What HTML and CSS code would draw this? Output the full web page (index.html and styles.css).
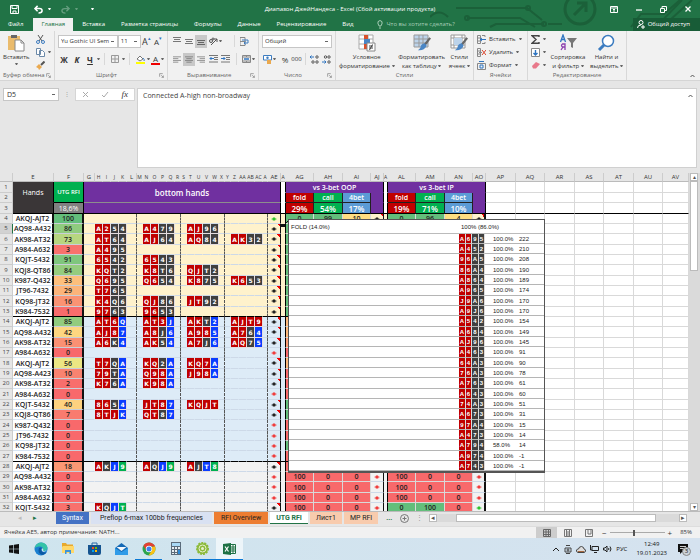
FILE: index.html
```html
<!DOCTYPE html>
<html lang="ru">
<head>
    <meta charset="UTF-8">
    <meta name="viewport" content="width=device-width, initial-scale=1.0">
    <title>Диапазон ДжейНандеса - Excel</title>
    <link rel="stylesheet" href="styles.css">
</head>
<body>
    <!-- Общие иконки -->
    <svg class="sprite" aria-hidden="true">
        <symbol id="i-eye" viewBox="0 0 12 8"><path d="M0 4Q6-2.500 12 4Q6 10.500 0 4Z" fill="currentColor" opacity=".55"/><circle cx="6" cy="4" r="2.800" fill="currentColor"/></symbol>
        <symbol id="i-launch" viewBox="0 0 8 8"><path d="M1 6V1H6M3.500 3.500L7 7M7 4V7H4" fill="none" stroke="#777"/></symbol>
        <symbol id="i-left" viewBox="0 0 12 10"><path d="M0 1H12M0 3.700H8M0 6.400H12M0 9H8" stroke="#666"/></symbol>
        <symbol id="i-center" viewBox="0 0 12 10"><path d="M0 1H12M2 3.700H10M0 6.400H12M2 9H10" stroke="#666"/></symbol>
        <symbol id="i-right" viewBox="0 0 12 10"><path d="M0 1H12M4 3.700H12M0 6.400H12M4 9H12" stroke="#666"/></symbol>
        <symbol id="i-brush" viewBox="0 0 16 16"><path d="M15 1L8 10" stroke="#666" stroke-width="2.500"/><path d="M9 7Q4 8 4 12Q3 14 1 15Q8 16 11 10Z" fill="#4a86c5"/></symbol>
    </svg>

    <header class="titlebar">
        <svg class="circuit" viewBox="0 0 270 29" fill="none" stroke="#1b6039" stroke-width="2">
            <circle cx="150" cy="9" r="15" stroke-width="3"/><path d="M144 15L156 3M147 3H156V12" stroke-width="3"/>
            <path d="M26 8H97L112 20M37 18H90L105 27M60 27L66 24H114M118 24H132M30 8H97M0 17Q9 8 18 17"/><circle cx="98" cy="8" r="2"/><circle cx="37" cy="18" r="2"/><circle cx="114" cy="24" r="2"/>
            <path d="M201 27L211 14H234L250 0M226 27L252 0M240 20L262 0"/>
        </svg>
        <div class="title-row">
            <div class="quick">
                <button aria-label="Сохранить"><svg width="9" height="9" viewBox="0 0 9 9" fill="none" stroke="#fff"><path d="M.5.500H8.500V8.500H.5ZM2 .5V3.500H7V.5M3 8.500V6H6V8.500"/></svg></button>
                <button aria-label="Отменить"><svg width="9" height="9" viewBox="0 0 10 10" fill="none" stroke="#fff" stroke-width="1.700"><path d="M4 1L1 4L4 7M1 4H6Q9 4 9 6.500Q9 9 5 9"/></svg></button>
                <span class="caret light"></span>
                <button class="faded" aria-label="Повторить"><svg width="9" height="9" viewBox="0 0 10 10" fill="none" stroke="#fff" stroke-width="1.500"><path d="M6 1L9 4L6 7M9 4H4Q1 4 1 6.500Q1 9 5 9"/></svg></button>
                <span class="caret light faded"></span>
                <span class="caret light custom"></span>
            </div>
            <h1>Диапазон ДжейНандеса - Excel (Сбой активации продукта)</h1>
            <div class="window-buttons">
                <button aria-label="Параметры ленты"><svg width="8" height="7" viewBox="0 0 8 7" fill="none" stroke="#fff"><path d="M.5.500H7.500V6.500H.5ZM1 2H7M4 6V3M3 4L4 3L5 4"/></svg></button>
                <button aria-label="Свернуть"><svg width="6" height="6" viewBox="0 0 6 6"><path d="M0 4H6" stroke="#fff" stroke-width="1.300"/></svg></button>
                <button aria-label="Восстановить"><svg width="7" height="7" viewBox="0 0 7 7" fill="none" stroke="#fff"><path d="M.5 2.500H4.500V6.500H.5ZM2 2V.5H6.500V4.500H5"/></svg></button>
                <button aria-label="Закрыть"><svg width="6" height="6" viewBox="0 0 6 6"><path d="M.5.500L5.500 5.500M5.500.500L.5 5.500" stroke="#fff" stroke-width="1.300"/></svg></button>
            </div>
        </div>
        <nav class="tabs">
            <a href="#">Файл</a>
            <a href="#" class="active">Главная</a>
            <a href="#">Вставка</a>
            <a href="#">Разметка страницы</a>
            <a href="#">Формулы</a>
            <a href="#">Данные</a>
            <a href="#">Рецензирование</a>
            <a href="#">Вид</a>
            <a href="#" class="tell-me"><svg width="6" height="9" viewBox="0 0 6 9" fill="none" stroke="#a6cdb6"><path d="M2 6Q2 5 1 4Q0 1 3 .5Q6 1 5 4Q4 5 4 6ZM2 8H4"/></svg>Что вы хотите сделать?</a>
            <button class="share"><svg width="8" height="9" viewBox="0 0 8 9" fill="none" stroke="#fff"><circle cx="4" cy="2.500" r="2"/><path d="M.5 8Q.5 5 4 5M4 7H8M6 5V9"/></svg>Общий доступ</button>
        </nav>
    </header>

    <section class="ribbon">
        <div class="group g-clipboard">
            <div class="tools">
                <button class="big"><svg width="18" height="18" viewBox="0 0 18 18"><path d="M1 2H13V16H1Z" fill="#eabb6c"/><path d="M4 1H10V4H4Z" fill="#666"/><path d="M8 6H14L17 9V17H8Z" fill="#fff" stroke="#888"/><path d="M14 6V9H17" fill="none" stroke="#888"/></svg>Вставить<span class="caret"></span></button>
                <div class="stack">
                    <button aria-label="Вырезать"><svg width="9" height="9" viewBox="0 0 9 9" fill="none"><path d="M2 0L6 6M7 0L3 6" stroke="#555"/><circle cx="2" cy="7" r="1.500" stroke="#3c7cc0"/><circle cx="7" cy="7" r="1.500" stroke="#3c7cc0"/></svg></button>
                    <button aria-label="Копировать"><svg width="9" height="9" viewBox="0 0 9 9" fill="#fff" stroke="#6b89a8"><path d="M.5.500H4.500V6.500H.5ZM3.500 2.500H6.500L8.500 4.500V8.500H3.500Z"/></svg><span class="caret"></span></button>
                    <button aria-label="Формат по образцу"><svg width="9" height="9" viewBox="0 0 9 9"><path d="M8.500.500L5 4" stroke="#555" stroke-width="2"/><path d="M3 3L6 6L3 9Q3 7 0 6Z" fill="#eaa94f"/></svg></button>
                </div>
            </div>
            <div class="group-name">Буфер обмена<svg width="5" height="5"><use href="#i-launch"/></svg></div>
        </div>

        <div class="group g-font">
            <div class="tools rows">
                <div class="row">
                    <select class="font-name" aria-label="Шрифт"><option>Yu Gothic UI Sem</option></select>
                    <select class="font-size" aria-label="Размер"><option>11</option></select>
                    <button class="grow" aria-label="Увеличить">A<i>▴</i></button>
                    <button class="shrink" aria-label="Уменьшить">A<i>▾</i></button>
                </div>
                <div class="row">
                    <button><b>Ж</b></button><button><b><em>К</em></b></button><button><b><u>Ч</u></b></button><span class="caret"></span>
                    <span class="sep"></span>
                    <button aria-label="Границы"><svg width="8" height="8" viewBox="0 0 8 8" fill="none" stroke="#999"><path d="M.5.500H7.500V7.500H.5ZM4 0V8M0 4H8"/></svg></button><span class="caret"></span>
                    <span class="sep"></span>
                    <button aria-label="Заливка"><svg width="9" height="9" viewBox="0 0 9 9"><path d="M1 4L4 1L7 4L4 6Z" fill="#fff" stroke="#777"/><path d="M7 3Q9 5 8 6" stroke="#3c7cc0" fill="none"/><path d="M0 7H9V9H0Z" fill="#ff0"/></svg></button><span class="caret"></span>
                    <button class="text-color">A</button><span class="caret"></span>
                </div>
            </div>
            <div class="group-name">Шрифт<svg width="5" height="5"><use href="#i-launch"/></svg></div>
        </div>

        <div class="group g-align">
            <div class="tools rows">
                <div class="row">
                    <button aria-label="По верхнему краю"><svg width="8" height="8" viewBox="0 0 8 8"><path d="M0 .5H8M1 2.500H7M0 4.500H8" stroke="#777"/></svg></button>
                    <button aria-label="По середине"><svg width="8" height="8" viewBox="0 0 8 8"><path d="M0 2.500H8M1 4.500H7M0 6.500H8" stroke="#777"/></svg></button>
                    <button class="on" aria-label="По нижнему краю"><svg width="8" height="8" viewBox="0 0 8 8"><path d="M0 3.500H8M1 5.500H7M0 7.500H8" stroke="#666"/></svg></button>
                    <button class="wide" aria-label="Ориентация"><svg width="9" height="9" viewBox="0 0 9 9" fill="none" stroke="#555"><path d="M2 8L8 2M5 2H8V5"/><circle cx="2" cy="4" r="1.500"/><circle cx="4" cy="2" r="1"/></svg></button><span class="caret"></span>
                    <span class="sep push"></span>
                    <button class="wrap" aria-label="Перенос текста"><svg width="9" height="9" viewBox="0 0 9 9" fill="none"><path d="M0 .5H5V8.500H0ZM0 4.500H5" stroke="#888"/><path d="M2 3H8V6H4M5.500 4.500L4 6L5.500 7.500" stroke="#3c7cc0"/></svg></button>
                </div>
                <div class="row">
                    <button aria-label="По левому краю"><svg width="8" height="7"><use href="#i-left"/></svg></button>
                    <button class="on" aria-label="По центру"><svg width="8" height="7"><use href="#i-center"/></svg></button>
                    <button aria-label="По правому краю"><svg width="8" height="7"><use href="#i-right"/></svg></button>
                    <button aria-label="Уменьшить отступ"><svg width="9" height="8" viewBox="0 0 9 8" fill="none"><path d="M0 .5H9M5 2.500H9M5 4.500H9M0 7H9" stroke="#777"/><path d="M5 3.500H1M2.500 2L1 3.500L2.500 5" stroke="#2f74c0"/></svg></button>
                    <button aria-label="Увеличить отступ"><svg width="9" height="8" viewBox="0 0 9 8" fill="none"><path d="M0 .5H9M5 2.500H9M5 4.500H9M0 7H9" stroke="#777"/><path d="M0 3.500H4M2.500 2L4 3.500L2.500 5" stroke="#2f74c0"/></svg></button>
                    <span class="sep push"></span>
                    <button aria-label="Объединить"><svg width="9" height="8" viewBox="0 0 9 8" fill="none"><path d="M.5.500H8.500V7.500H.5ZM4.500 0V2M4.500 6V8M0 2H9M0 6H9" stroke="#888"/><path d="M2 4H7" stroke="#2f74c0" stroke-width="1.500"/></svg></button><span class="caret"></span>
                </div>
            </div>
            <div class="group-name">Выравнивание<svg width="5" height="5"><use href="#i-launch"/></svg></div>
        </div>

        <div class="group g-number">
            <div class="tools rows">
                <div class="row"><select class="num-format" aria-label="Формат числа"><option>Общий</option></select></div>
                <div class="row">
                    <button aria-label="Денежный формат"><svg width="9" height="9" viewBox="0 0 9 9"><path d="M.5.500H8.500V5H.5Z" fill="#fff" stroke="#3c7cc0"/><circle cx="4.500" cy="2.800" r="1.200" fill="#3c7cc0"/><path d="M4 5H8V9H4Z" fill="#eaa94f"/></svg></button><span class="caret"></span>
                    <button class="pct">%</button><button class="zeros">000</button>
                    <span class="sep"></span>
                    <button class="digits" aria-label="Увеличить разрядность"><svg width="9" height="9" viewBox="0 0 9 9" fill="none"><path d="M4 2H0M1.500.500L0 2L1.500 3.500" stroke="#2f74c0"/><circle cx="7" cy="2" r="1.200" stroke="#555"/><circle cx="3" cy="7" r="1.200" stroke="#555"/><circle cx="7" cy="7" r="1.200" stroke="#555"/></svg></button>
                    <button class="digits" aria-label="Уменьшить разрядность"><svg width="9" height="9" viewBox="0 0 9 9" fill="none"><path d="M0 7H4M2.500 5.500L4 7L2.500 8.500" stroke="#2f74c0"/><circle cx="7" cy="2" r="1.200" stroke="#555"/><circle cx="3.500" cy="2" r="1.200" stroke="#555"/><circle cx="7" cy="7" r="1.200" stroke="#555"/></svg></button>
                </div>
            </div>
            <div class="group-name">Число<svg width="5" height="5"><use href="#i-launch"/></svg></div>
        </div>

        <div class="group g-styles">
            <div class="tools">
                <button class="big"><svg width="18" height="18" viewBox="0 0 18 18"><path d="M1 1H15V15H1ZM1 5H15M1 10H15M10 1V15" fill="#fff" stroke="#aaa"/><path d="M6 1H10V5H6ZM6 10H9V15H6Z" fill="#d9512c"/><path d="M6 5H12V10H6Z" fill="#4a86c5"/><path d="M9 9H17V17H9Z" fill="#fff" stroke="#888"/><path d="M11 12H15M11 14H15M14.500 10.500L11.500 16" stroke="#444"/></svg><span>Условное<br>форматирование <span class="caret"></span></span></button>
                <button class="big"><svg width="18" height="18" viewBox="0 0 18 18"><path d="M1 1H15V13H1Z" fill="#bcd3ea"/><path d="M1 1H15V13H1ZM1 5H15M1 9H15M6 1V13M10 1V13" fill="none" stroke="#999"/><use href="#i-brush" x="4" y="3" width="14" height="14"/></svg><span>Форматировать<br>как таблицу <span class="caret"></span></span></button>
                <button class="big"><svg width="18" height="18" viewBox="0 0 18 18"><path d="M1 1H15V14H1ZM1 4H15M1 11H15M4 1V14M12 1V14" fill="#fff" stroke="#999"/><path d="M4 4H12V11H4Z" fill="#bcd3ea"/><use href="#i-brush" x="4" y="3" width="14" height="14"/></svg><span>Стили<br>ячеек <span class="caret"></span></span></button>
            </div>
            <div class="group-name">Стили</div>
        </div>

        <div class="group g-cells">
            <div class="tools">
                <div class="stack">
                    <button><svg width="9" height="9" viewBox="0 0 9 9" fill="none"><path d="M.5.500H3.500V8.500H.5ZM0 3H3M0 6H3M5 .5H8V2M5 8.500H8V7" stroke="#888"/><path d="M9 4.500H3M5 3L3 4.500L5 6" stroke="#2f74c0"/></svg>Вставить <span class="caret"></span></button>
                    <button><svg width="9" height="9" viewBox="0 0 9 9" fill="none"><path d="M.5.500H3.500V8.500H.5ZM0 3H3M0 6H3M2 4.500H5" stroke="#888"/><path d="M5 2L9 7M9 2L5 7" stroke="#d8432b"/></svg>Удалить <span class="caret"></span></button>
                    <button><svg width="9" height="9" viewBox="0 0 9 9" fill="none"><path d="M.5 2.500H8.500V8.500H.5Z" stroke="#888"/><path d="M2 .5H7M3 4H6V7H3Z" stroke="#2f74c0"/></svg>Формат <span class="caret"></span></button>
                </div>
            </div>
            <div class="group-name">Ячейки</div>
        </div>

        <div class="group g-edit">
            <div class="tools">
                <div class="stack">
                    <button aria-label="Сумма"><svg width="9" height="9" viewBox="0 0 9 9" fill="none"><path d="M8 2V.8H1L5 4.500L1 8.200H8V7" stroke="#444" stroke-width="1.400"/></svg><span class="caret"></span></button>
                    <button aria-label="Заполнить"><svg width="9" height="9" viewBox="0 0 9 9" fill="none"><path d="M.5.500H8.500V8.500H.5Z" fill="#fff" stroke="#888"/><path d="M4.500 2V7M2.500 5L4.500 7L6.500 5" stroke="#2f74c0" stroke-width="1.400"/></svg><span class="caret"></span></button>
                    <button aria-label="Очистить"><svg width="9" height="9" viewBox="0 0 9 9"><path d="M1 5L5 1L9 3L5 7.500H2Z" fill="#e8788a"/></svg><span class="caret"></span></button>
                </div>
                <button class="big"><svg width="18" height="18" viewBox="0 0 18 18"><path d="M1.500 8L4 1L6.500 8M2.500 5.500H5.500" fill="none" stroke="#2f74c0" stroke-width="1.300"/><path d="M6 16V10H3.500Q1.500 11.500 3.500 13H6M4 13L2 16" fill="none" stroke="#8b3fae" stroke-width="1.300"/><path d="M8 4H18L14 9V14L12 13V9Z" fill="#777"/></svg><span>Сортировка<br>и фильтр <span class="caret"></span></span></button>
                <button class="big"><svg width="18" height="18" viewBox="0 0 18 18" fill="none"><path d="M8 10L2 16" stroke="#3c7cc0" stroke-width="3"/><circle cx="11" cy="7" r="5.500" fill="#fff" stroke="#3c7cc0" stroke-width="1.500"/></svg><span>Найти и<br>выделить <span class="caret"></span></span></button>
            </div>
            <div class="group-name">Редактирование</div>
        </div>
        <button class="collapse" aria-label="Свернуть ленту"><svg width="5" height="4" viewBox="0 0 5 4" fill="none" stroke="#555"><path d="M.5 3L2.500 1L4.500 3"/></svg></button>
    </section>

    <section class="formula-bar">
        <select class="name-box" aria-label="Имя"><option>D5</option></select>
        <span class="dots">⋮</span>
        <div class="fx">
            <svg width="7" height="7" viewBox="0 0 7 7"><path d="M1 1L6 6M6 1L1 6" stroke="#aaa"/></svg>
            <svg width="8" height="7" viewBox="0 0 8 7" fill="none"><path d="M1 4L3 6L7 1" stroke="#aaa"/></svg>
            <em>fx</em>
        </div>
        <div class="formula">
            <textarea aria-label="Строка формул">Connected A-high non-broadway</textarea>
            <button aria-label="Свернуть строку формул"><svg width="5" height="4" viewBox="0 0 5 4" fill="none" stroke="#555"><path d="M.5 3L2.500 1L4.500 3"/></svg></button>
        </div>
    </section>

    <main class="workspace">
        <div class="sheet">
            <table class="grid">
                <colgroup id="cols"></colgroup>
                <thead>
                    <tr class="letters" id="letters"></tr>
                    <tr class="h1">
                        <th class="num">1</th>
                        <td class="hands" rowspan="2">Hands</td>
                        <td class="rfi" rowspan="2">UTG RFI</td>
                        <td class="purple big-title" rowspan="2" colspan="25">bottom hands</td>
                        <td class="gap"></td>
                        <td class="purple" colspan="4">vs 3-bet OOP</td>
                        <td class="gap"></td>
                        <td class="purple" colspan="4">vs 3-bet IP</td>
                        <td></td><td></td><td></td><td></td><td></td><td></td><td></td>
                    </tr>
                    <tr class="h2">
                        <th class="num">2</th>
                        <td class="gap"></td>
                        <td class="fold">fold</td><td class="call">call</td><td class="bet">4bet</td><td class="purple"></td>
                        <td class="gap"></td>
                        <td class="fold">fold</td><td class="call">call</td><td class="bet">4bet</td><td class="purple"></td>
                        <td></td><td></td><td></td><td></td><td></td><td></td><td></td>
                    </tr>
                    <tr class="h3">
                        <th class="num">3</th>
                        <td class="hands"></td>
                        <td class="share-pct">18,6%</td>
                        <td class="purple" colspan="25"></td>
                        <td class="gap"></td>
                        <td class="fold">29%</td><td class="call">54%</td><td class="bet">17%</td><td class="purple"></td>
                        <td class="gap"></td>
                        <td class="fold">19%</td><td class="call">71%</td><td class="bet">10%</td><td class="purple"></td>
                        <td></td><td></td><td></td><td></td><td></td><td></td><td></td>
                    </tr>
                </thead>
                <tbody id="hands"></tbody>
            </table>

            <!-- Примечание к ячейке AE5 -->
            <svg class="pointer" width="10" height="10" viewBox="0 0 10 10"><path d="M2 8L8 2L9 1" stroke="#111" fill="none"/><path d="M0 6H4V9H0Z" fill="#111"/></svg>
            <div class="note">
                <table>
                    <colgroup><col><col class="c-odd"><col class="c-even"><col class="c-odd"><col class="c-even"><col class="c-pct"><col class="c-combo"></colgroup>
                    <thead><tr><th>FOLD (14.0%)</th><th colspan="6">100% (86.0%)</th></tr></thead>
                    <tbody id="note-rows"></tbody>
                </table>
            </div>
        </div>
        <div class="vscroll"><button aria-label="Вверх">▴</button><div class="thumb"></div><button aria-label="Вниз">▾</button></div>
    </main>

    <footer class="sheet-tabs">
        <div class="arrows"><button class="off">◂</button><button>▸</button></div>
        <a href="#" class="t-blue">Syntax</a>
        <a href="#" class="t-pale">Preflop 6-max 100bb frequencies</a>
        <a href="#" class="t-orange">RFI Overview</a>
        <a href="#" class="t-active">UTG RFI</a>
        <a href="#" class="t-peach">Лист1</a>
        <a href="#" class="t-peach">MP RFI</a>
        <span class="more">...</span>
        <button class="add" aria-label="Новый лист"><svg width="9" height="9" viewBox="0 0 9 9" fill="none" stroke="#777"><circle cx="4.500" cy="4.500" r="4"/><path d="M4.500 2.500V6.500M2.500 4.500H6.500"/></svg></button>
        <span class="dots">⋮</span>
        <div class="hscroll"><button aria-label="Влево">◂</button><div class="thumb"></div><button aria-label="Вправо">▸</button></div>
    </footer>

    <div class="status">
        <span class="message">Ячейка AE5, автор примечания: NATH...</span>
        <button class="view on" aria-label="Обычный"><svg width="8" height="8" viewBox="0 0 8 8" fill="none" stroke="#666"><path d="M.5.500H7.500V7.500H.5ZM3 0V8M5.500 0V8M0 3H8M0 5.500H8"/></svg></button>
        <button class="view" aria-label="Разметка страницы"><svg width="8" height="8" viewBox="0 0 8 8" fill="none" stroke="#777"><path d="M.5.500H7.500V7.500H.5ZM2.500 1V7H5.500V1M3 3H5M3 5H5"/></svg></button>
        <button class="view" aria-label="Страничный"><svg width="8" height="8" viewBox="0 0 8 8" fill="none" stroke="#777"><path d="M.5.500H7.500V7.500H.5ZM3 0V5H6V0"/></svg></button>
        <span class="zoom-sign">−</span>
        <input type="range" min="10" max="160" value="75" aria-label="Масштаб">
        <span class="zoom-sign">+</span>
        <span class="zoom-value">85%</span>
    </div>

    <div class="taskbar">
        <button aria-label="Пуск"><svg width="10" height="10" viewBox="0 0 10 10" fill="#111"><path d="M0 1.500L4.300.900V4.700H0ZM5 .8L10 0V4.700H5ZM0 5.300H4.300V9.100L0 8.500ZM5 5.300H10V10L5 9.200Z"/></svg></button>
        <button aria-label="Edge"><svg width="14" height="14" viewBox="0 0 14 14"><circle cx="7" cy="7" r="6.500" fill="#1b7fd0"/><path d="M.7 6Q2 .5 7.500.500Q13 1 13.500 6Q13 9 9.500 9Q8 8.500 9 7.500Q9 4.500 6 4.500Q3 4 .7 6Z" fill="#35c3a8"/><path d="M5 6Q3 11 8 13Q11 13 13 10Q9 11.500 7.500 8.500Q7 7 8 6Q6.500 5 5 6Z" fill="#0c59a4"/><path d="M8 6Q10 7 9 8.500Q10 9.500 13 8Q11 10.500 8.500 9.500Q7 8 8 6Z" fill="#d4e7ef"/></svg></button>
        <button aria-label="Проводник"><svg width="12" height="11" viewBox="0 0 12 11"><path d="M0 0H4L5 1.500H11V10H0Z" fill="#e8a92c"/><path d="M1 3H12V10H0V4Z" fill="#ffd869"/><path d="M3 7H9V11H7.500V9H4.500V11H3Z" fill="#3b93d8"/></svg></button>
        <button aria-label="Магазин"><svg width="13" height="13" viewBox="0 0 13 13"><path d="M4 3V1H9V3" fill="none" stroke="#2b6aa6"/><path d="M0 3H13V11Q13 13 11 13H2Q0 13 0 11Z" fill="#15548f"/><path d="M4 5H6V7H4Z" fill="#f25022"/><path d="M7 5H9V7H7Z" fill="#7fba00"/><path d="M4 8H6V10H4Z" fill="#00a4ef"/><path d="M7 8H9V10H7Z" fill="#ffb900"/></svg></button>
        <button aria-label="Почта"><svg width="13" height="12" viewBox="0 0 13 12"><path d="M0 5L6.500 0L13 5V12H0Z" fill="#1569b5"/><path d="M1.500 4H11.500L6.500 8Z" fill="#f4f8fb"/><path d="M0 5L6.500 9L13 5V12H0Z" fill="#2f9be8"/></svg></button>
        <button class="running" aria-label="Chrome"><svg width="14" height="14" viewBox="0 0 14 14"><circle cx="7" cy="7" r="6.500" fill="#2da44e"/><path d="M1.400 3.700Q3.500.500 7 .5Q11 .5 12.800 4H7L4.500 8.500Z" fill="#e34133"/><path d="M12.800 4Q14.500 8 12 11Q9.500 13.500 6.500 13.500L9.800 8.500V5Z" fill="#fbc116"/><path d="M7 4H12.800" stroke="#e34133"/><circle cx="7" cy="7" r="3.200" fill="#fff"/><circle cx="7" cy="7" r="2.500" fill="#3f80ed"/></svg></button>
        <button aria-label="Калькулятор"><svg width="10" height="13" viewBox="0 0 10 13"><path d="M0 0H10V13H0Z" fill="#5a6b7a"/><path d="M1 1H9V4H1Z" fill="#a8d8f5"/><path d="M1 5H3V7H1ZM4 5H6V7H4ZM7 5H9V7H7ZM1 8H3V10H1ZM4 8H6V10H4ZM1 11H3V12H1ZM4 11H6V12H4Z" fill="#e6edf2"/><path d="M7 8H9V12H7Z" fill="#2d8bd8"/></svg></button>
        <button class="running" aria-label="Монитор"><svg width="13" height="13" viewBox="0 0 13 13"><circle cx="6.500" cy="6.500" r="5.500" fill="#8cba3b" stroke="#8cba3b" stroke-width="2" stroke-dasharray="2 1"/><circle cx="6.500" cy="6.500" r="3.500" fill="none" stroke="#e7f1cf"/><circle cx="6.500" cy="6.500" r="1.500" fill="#e7f1cf"/></svg></button>
        <button class="running current" aria-label="Excel"><svg width="13" height="12" viewBox="0 0 13 12"><path d="M6 1.500H12.500V10.500H6Z" fill="#fff" stroke="#1e7145"/><path d="M8 4H12M8 6H12M8 8H12M10 2V10" stroke="#1e7145"/><path d="M0 1L8 0V12L0 11Z" fill="#1e7145"/><path d="M2 3.500L5.500 8.500M5.500 3.500L2 8.500" stroke="#fff" stroke-width="1.200"/></svg></button>
        <div class="tray">
            <svg width="8" height="6" viewBox="0 0 8 6" fill="none" stroke="#222"><path d="M1 5L4 2L7 5"/></svg>
            <svg width="8" height="9" viewBox="0 0 8 9" fill="none" stroke="#444"><path d="M1 3H7V7H1ZM2 .5H6M2 8.500H6"/><circle cx="4" cy="5" r="1"/></svg>
            <svg width="10" height="7" viewBox="0 0 10 7"><path d="M2 6.500Q0 6 .5 4Q1 3 2.500 3Q3 .5 5.500.500Q8 1 8 3Q10 3.500 9.500 5Q9 6.500 8 6.500Z" fill="#ddd" stroke="#444"/><path d="M2 5H8V6H2Z" fill="#a8693f"/></svg>
            <svg width="9" height="8" viewBox="0 0 9 8" fill="none" stroke="#222"><path d="M2 1.500H8.500V5.500H2ZM4 7.500H7M.5 0V5H2"/></svg>
            <svg width="9" height="8" viewBox="0 0 9 8" fill="none" stroke="#222"><path d="M.5 3H2L4 1V7L2 5H.5ZM5.500 3Q6.500 4 5.500 5M7 1.500Q9 4 7 6.500"/></svg>
            <span>РУС</span>
            <time>12:49<br>19.01.2023</time>
            <button class="bell" aria-label="Уведомления"><svg width="10" height="10" viewBox="0 0 10 10"><path d="M0 0H10V8H4L2 10V8H0Z" fill="#111"/><path d="M2 2.500H8M2 4.500H8" stroke="#ccc"/></svg><span class="badge">3</span></button>
        </div>
    </div>

    <script src="sheet.js"></script>
</body>
</html>
```
FILE: styles.css
```css
* {
    box-sizing: border-box;
}

body {
    margin: 0;
    height: 100vh;
    display: flex;
    flex-direction: column;
    overflow: hidden;
    background: #e6e6e6;
    color: #333;
    font-family: "Open Sans", sans-serif;
    font-size: 6px;
    line-height: 9px;
}

button, select, textarea, input {
    margin: 0;
    padding: 0;
    border: none;
    border-radius: 0;
    background: none;
    color: inherit;
    font: inherit;
    appearance: none;
}

button {
    display: flex;
    align-items: center;
    justify-content: center;
}

a {
    color: inherit;
    text-decoration: none;
}

svg {
    flex: none;
    display: block;
}

.sprite {
    position: absolute;
    width: 0;
    height: 0;
}

.caret {
    display: inline-block;
    flex: none;
    border: 1px solid transparent;
    border-top: 2px solid #666;
    border-bottom: none;
    width: 3px;
    height: 2px;
    vertical-align: middle;
}

.caret.light {
    border-top-color: #fff;
}

.faded {
    opacity: 0.3;
}

/* Заголовок окна */
.titlebar {
    flex: none;
    position: relative;
    background: #217346;
    color: #fff;
}

.circuit {
    position: absolute;
    top: 0;
    right: 0;
    width: 270px;
    height: 29px;
}

.title-row {
    position: relative;
    display: grid;
    grid-template-columns: 1fr auto 1fr;
    align-items: center;
    height: 18px;
}

.quick {
    display: flex;
    align-items: center;
    gap: 5px;
    padding-left: 10px;
}

.quick button:nth-child(2) {
    margin-left: 10px;
}

.quick .caret + button {
    margin-left: 5px;
}

.quick .custom {
    margin-left: 8px;
}

h1 {
    margin: 0;
    font-size: 6px;
    font-weight: 400;
}

.window-buttons {
    display: flex;
    justify-content: flex-end;
    align-items: center;
    gap: 18px;
    padding-right: 9px;
}

.tabs {
    position: relative;
    display: flex;
    height: 13px;
}

.tabs a {
    display: flex;
    align-items: center;
    padding: 0 8px;
}

.tabs .active {
    margin: 0 1px 0 2px;
    background: #f1f1f1;
    color: #217346;
}

.tabs .tell-me {
    gap: 3px;
    margin-left: 8px;
    color: #a6cdb6;
}

.share {
    gap: 3px;
    margin-left: auto;
    padding: 0 10px 0 4px;
    background: #185c37;
}

/* Лента */
.ribbon {
    flex: none;
    display: flex;
    height: 50px;
    background: #f1f1f1;
    border-bottom: 1px solid #d5d5d5;
}

.group {
    flex: none;
    display: flex;
    flex-direction: column;
    justify-content: space-between;
    padding: 3px 3px 0;
    border-right: 1px solid #d8d8d8;
}

.g-clipboard { width: 55px; }
.g-font { width: 113px; }
.g-align { width: 91px; }
.g-number { width: 77px; }
.g-styles { width: 138px; }
.g-cells { width: 54px; }
.g-edit { width: 99px; }

.tools {
    display: flex;
    justify-content: space-between;
    height: 37px;
}

.rows {
    flex-direction: column;
    justify-content: flex-start;
    gap: 4px;
}

.row {
    display: flex;
    align-items: center;
    height: 14px;
}

.row button {
    width: 12px;
    height: 13px;
}

.row .on {
    background: #c8c8c8;
}

.row b {
    font-size: 8px;
}

.g-font .row {
    gap: 1px;
}

.g-font .row:first-child {
    gap: 0;
}

.sep {
    width: 1px;
    height: 12px;
    margin: 0 3px;
    background: #d8d8d8;
}

.push {
    margin-left: auto;
}

.row .wrap {
    margin-right: 5px;
}

.big {
    flex-direction: column;
    justify-content: flex-start;
    gap: 1px;
    height: 37px;
    line-height: 9px;
    white-space: nowrap;
}

.stack {
    display: flex;
    flex-direction: column;
    gap: 3px;
}

.stack button {
    justify-content: flex-start;
    gap: 3px;
    height: 10px;
}

.group-name {
    display: flex;
    justify-content: center;
    color: #666;
    white-space: nowrap;
}

.group-name svg {
    margin: 2px 0 0 auto;
}

.g-font .group-name { padding-left: 38px; }
.g-align .group-name { padding-left: 16px; }
.g-number .group-name { padding-left: 22px; }

.ribbon select, .name-box {
    height: 13px;
    padding: 0 2px;
    border: 1px solid #c6c6c6;
    background: linear-gradient(#666, #666) right 3px center / 3px 1px no-repeat #fff;
}

.font-name { width: 61px; }
.font-size { width: 23px; }
.num-format { width: 71px; }

.row .grow { font-size: 9px; }
.row .shrink { font-size: 8px; }

.row i {
    align-self: flex-start;
    font-size: 5px;
    line-height: 6px;
    font-style: normal;
    color: #2f74c0;
}

.row .text-color {
    height: 11px;
    border-bottom: 2px solid #e00;
    width: 9px;
    font-size: 8px;
}

.row .pct {
    margin-left: 3px;
    font-size: 8px;
}

.collapse {
    margin: auto 5px 2px auto;
}

/* Строка формул */
.formula-bar {
    flex: none;
    display: flex;
    align-items: flex-start;
    height: 92px;
    padding: 7px 3px 5px;
}

.name-box {
    width: 56px;
    padding: 0 3px;
    font-size: 7px;
}

.dots {
    width: 16px;
    text-align: center;
    line-height: 13px;
    color: #999;
}

.fx {
    display: flex;
    align-items: center;
    justify-content: space-around;
    width: 60px;
    height: 13px;
    margin-right: 2px;
    border: 1px solid #d5d5d5;
    background: #fff;
    font-family: "Liberation Serif", serif;
    font-size: 9px;
}

.formula {
    flex: 1;
    display: flex;
    align-items: flex-start;
    height: 80px;
    padding: 2px 3px 2px 5px;
    border: 1px solid #d0d0d0;
    background: #fff;
}

.formula textarea {
    flex: 1;
    height: 74px;
    resize: none;
    color: #444;
    font-size: 7px;
}

.formula button {
    padding-top: 3px;
}

/* Лист */
.workspace {
    flex: 1;
    min-height: 0;
    display: flex;
}

.sheet {
    flex: 1;
    position: relative;
    overflow: hidden;
    background: #fff;
}

.grid {
    width: 100%;
    table-layout: fixed;
    border-spacing: 0;
    color: #222;
    font-weight: 600;
    font-size: 7px;
    line-height: 9px;
    text-align: center;
}

.grid td, .grid th {
    height: 10px;
    padding: 0;
    border-right: 1px solid #d9d9d9;
    border-bottom: 1px solid #d9d9d9;
    white-space: nowrap;
}

.grid .letters th {
    height: 9px;
    line-height: 8px;
    background: #e6e6e6;
    border-right-color: #ccc;
    border-bottom-color: #bbb;
    font-weight: 400;
    font-size: 6px;
    color: #333;
}

.grid .letters .narrow {
    border-right-color: transparent;
    font-size: 5px;
}

.grid .num {
    background: #e6e6e6;
    border-color: #ccc;
    font-weight: 400;
    font-size: 6px;
    color: #444;
}

.grid .num.selected {
    background: #d2d2d2;
    border-right-color: #217346;
}

.grid .h1 td, .grid .h3 td, .grid .h1 th, .grid .h3 th,
.grid tbody tr:nth-child(3n) td {
    height: 11px;
}

.grid .hands {
    background: #3a3637;
    border-color: #3a3637;
    border-right-color: #000;
    color: #fff;
    font-weight: 400;
}

.grid .rfi {
    background: #00b050;
    border-color: #000;
    color: #fff;
    font-size: 6px;
}

.grid .share-pct {
    background: #808080;
    border-color: #000;
    color: #fff;
    font-weight: 400;
}

.grid .purple {
    background: #7030a0;
    border-color: #7030a0;
    color: #fff;
}

.grid .big-title {
    font-size: 8px;
    border-bottom-color: #8d8d8d;
}

.grid .gap {
    border-right: 1px solid #000;
    border-bottom-color: transparent;
}

.grid thead .purple {
    border-right-color: #000;
}

.grid .fold, .grid .call, .grid .bet {
    border-color: #222;
    color: #fff;
}

.grid .fold { background: #c00000; }
.grid .call { background: #00b050; }
.grid .bet { background: #5b9bd5; }

.grid .h3 td {
    border-bottom-color: #000;
}

.grid .h3 .fold, .grid .h3 .call, .grid .h3 .bet {
    font-size: 8px;
}

.grid .name {
    background: #fff;
    border-right: 2px solid #111;
    border-bottom-color: #d6e4f4;
}

.grid .freq {
    border-right: 2px solid #111;
    border-bottom-color: #c9cfd8;
}

.yellow td { background: #fff2cc; }
.blue td { background: #ddebf7; }
.gray td { background: #f2f2f2; }

.grid .plain {
    border-bottom-color: #cdd9e8;
}

.yellow .plain { border-right-color: #fff2cc; }
.blue .plain { border-right-color: #ddebf7; }
.gray .plain { border-right-color: #f2f2f2; }

.grid .dashed {
    border-right: 1px dashed #555;
}

.grid .out {
    background: #fff;
}

.grid .last td:not(.out) {
    border-bottom: 1px solid #000;
}

.grid .card {
    color: #fff;
    font-family: "DejaVu Sans", sans-serif;
    font-size: 6px;
    font-weight: 700;
    border-color: #e4dde0;
}

.grid .r { background: #c00000; }
.grid .k { background: #404040; }
.grid .b { background: #0a3cff; }
.grid .g { background: #00b050; }

.grid .eye {
    border-right-color: #111;
    border-bottom-color: #cdd9e8;
    color: #222;
}

.eye svg {
    width: 6px;
    height: 4px;
    margin: 0 auto;
}

.grid .eye.zero { color: #f03c3c; }
.grid .eye.full { color: #2fc22f; }

.grid .commented {
    background-image: linear-gradient(45deg, transparent 50%, #e00 50%);
    background-size: 3px 3px;
    background-position: right top;
    background-repeat: no-repeat;
}

.grid .edge {
    border-right: 2px solid #111;
}

/* Примечание */
.note {
    position: absolute;
    left: 288px;
    top: 46px;
    width: 257px;
    border: 1px solid #555;
    border-bottom-width: 2px;
    background: #fff;
}

.pointer {
    position: absolute;
    left: 281px;
    top: 45px;
}

.note table {
    width: 100%;
    table-layout: fixed;
    border-spacing: 0;
    font-family: "Liberation Sans", sans-serif;
    line-height: 8px;
    color: #222;
}

.note th {
    height: 14px;
    padding: 0 2px;
    border-bottom: 1px solid #bbb;
    font-weight: 400;
    text-align: left;
}

.note td {
    height: 10px;
    padding: 0;
    border-bottom: 1px solid #b5b5b5;
}

.note tr:nth-child(3n) td {
    height: 11px;
}

.c-odd { width: 7px; }
.c-even { width: 6px; }
.c-pct { width: 34px; }
.c-combo { width: 25px; }

.note .card {
    border-right: 1px solid #ddd;
    color: #fff;
    font-weight: 700;
    text-align: center;
}

.note .r { background: #c00000; }
.note .k { background: #404040; }
.note .pct { padding-left: 8px; }

/* Полосы прокрутки */
.vscroll {
    flex: none;
    display: flex;
    flex-direction: column;
    width: 11px;
    padding: 0 2px 0 1px;
    background: #dadada;
}

.vscroll button, .hscroll button {
    flex: none;
    width: 8px;
    height: 8px;
    border: 1px solid #bbb;
    background: #fff;
    color: #555;
}

.vscroll .thumb {
    height: 90px;
    margin-bottom: auto;
    border: 1px solid #bbb;
    background: #fff;
}

.hscroll {
    flex: 1;
    display: flex;
    align-items: center;
    margin-right: 13px;
    background: #dadada;
}

.hscroll .thumb {
    width: 200px;
    height: 8px;
    margin: 0 auto 0 19px;
    border: 1px solid #bbb;
    background: #fff;
}

/* Ярлыки листов */
.sheet-tabs {
    flex: none;
    display: flex;
    align-items: center;
    gap: 2px;
    height: 15px;
    padding-bottom: 2px;
    border-top: 1px solid #bbb;
    font-family: Roboto, sans-serif;
    font-size: 7px;
}

.sheet-tabs a {
    padding: 0 6px;
    height: 12px;
    line-height: 12px;
    white-space: nowrap;
    color: #222;
}

.arrows {
    display: flex;
    justify-content: center;
    gap: 11px;
    width: 54px;
    color: #217346;
}

.arrows .off { color: #bbb; }

.sheet-tabs .t-blue { background: #4472c4; color: #fff; }
.sheet-tabs .t-pale { background: #d9e1f2; padding: 0 9px; }
.sheet-tabs .t-orange { background: #ed7d31; padding: 0 7px; }
.sheet-tabs .t-active { background: #fff; color: #217346; font-weight: 700; border-bottom: 1px solid #217346; }
.sheet-tabs .t-peach { background: #f8cbad; }

.more {
    padding: 0 6px;
    color: #217346;
    font-weight: 700;
}

/* Строка состояния */
.status {
    flex: none;
    display: flex;
    align-items: center;
    height: 12px;
    padding: 0 8px 0 4px;
    background: #f1f1f1;
    border-top: 1px solid #ddd;
}

.message {
    margin-right: auto;
}

.view {
    width: 21px;
    height: 11px;
}

.view.on {
    background: #cdcdcd;
}

.zoom-sign {
    padding: 0 3px;
    font-size: 8px;
}

.status input {
    width: 55px;
    height: 8px;
    background: linear-gradient(#aaa, #aaa) center / 100% 1px no-repeat;
}

.status input::-webkit-slider-thumb {
    appearance: none;
    width: 2px;
    height: 6px;
    background: #555;
}

.zoom-value {
    margin-left: 5px;
}

/* Панель задач */
.taskbar {
    flex: none;
    display: flex;
    height: 22px;
    background: linear-gradient(90deg, #cfe5ee, #d5e2ef);
    color: #111;
}

.taskbar > button {
    width: 27px;
    border-bottom: 1px solid transparent;
}

.taskbar .running {
    border-bottom: 1px solid #0a78d4;
}

.taskbar .current {
    background: #edf5f9;
}

.tray {
    display: flex;
    align-items: center;
    gap: 4px;
    margin-left: auto;
    padding-right: 12px;
}

.tray time {
    padding: 0 7px 0 5px;
    text-align: center;
}

.bell {
    position: relative;
}

.badge {
    position: absolute;
    left: 4px;
    top: 3px;
    width: 9px;
    height: 9px;
    border-radius: 50%;
    background: #ccd3d9;
    border: 1px solid #888;
    line-height: 7px;
}
```
FILE: sheet.js
```javascript
// Колонки листа: имя и ширина, последняя занимает остаток
const columns = [
    ['E', 41], ['F', 30], ['G', 11], ['H', 8], ['I', 8], ['J', 8], ['K', 8], ['L', 10],
    ['M', 6], ['N', 8], ['O', 8], ['P', 8], ['Q', 8], ['R', 6],
    ['S', 6], ['T', 8], ['U', 8], ['V', 8], ['W', 8], ['X', 6],
    ['Y', 6], ['Z', 8], ['AA', 8], ['AB', 8], ['AC', 8], ['A', 5], ['AE', 13], ['A', 5],
    ['AG', 28], ['AH', 29], ['AI', 28], ['AJ', 13], ['A', 4],
    ['AL', 28], ['AM', 29], ['AN', 28], ['AO', 13],
    ['AP', 30], ['AQ', 29], ['AR', 30], ['AS', 29], ['AT', 30], ['AU', 29], ['AV', 0]
];

// Рука, частота, примеры рук с мастями, ответы на 3-bet OOP и IP
const rows = [
    ['AKQJ-AJT2', 100, [], [0, 99, 10], [0, 96, 4]],
    ['AQ98-A432', 86, ['A254 rrkk', 'A479 rrkk', 'AJ96 rrkk'], [9, 80, 11]],
    ['AK98-AT32', 73, ['AT64 rrkk', 'AJ64 rrkk', 'AQ84 rrkk', 'AK32 rrkk'], [9, 80, 11]],
    ['A984-A632', 3, ['A495 rrkk'], [9, 80, 11]],
    ['KQJT-5432', 91, ['6542 rrkk', '6543 rrkk'], [9, 80, 11]],
    ['KQJ8-QT86', 84, ['KQT2 rrkk', 'K8T6 rrkk', 'QJT2 rrkk'], [9, 80, 11]],
    ['K987-Q432', 33, ['Q695 rrkk', 'Q654 rrkk', 'K875 rrkk', 'K653 rrkk'], [9, 80, 11]],
    ['JT96-7432', 29, ['T765 rrkk'], [9, 80, 11]],
    ['KQ98-JT32', 16, ['K4Q6 rrkk', 'QJ86 rrkk', 'JT92 rrkk'], [9, 80, 11]],
    ['K984-7532', 1, ['9763 rrkk', '9653 rrkk'], [9, 80, 11]],
    ['AKQJ-AJT2', 85, ['AT6Q rrrb', 'AT3J rrrb', 'AKT2 rrkb', 'AJT9 rrrr'], [70, 30, 0]],
    ['AQ98-A432', 42, ['AJ87 rrrb', 'A8J6 rrkb', 'A985 rrrb', 'A764 rrkb'], [70, 30, 0]],
    ['AK98-AT32', 15, ['A6K4 rrkb', 'AK54 rrkb', 'A7J6 rrkb', 'AQ75 rrkb'], [80, 20, 0]],
    ['A984-A632', 0, [], [100, 0, 0]],
    ['AKQJ-AJT2', 56, ['T7QA rrkb', 'KQ2A rrkb', 'KQ7A rrrb'], [70, 30, 0]],
    ['AQ98-A423', 10, ['79TA rrkb', 'Q98A rrrb', 'J98A rrrb'], [100, 0, 0]],
    ['AK98-AT32', 2, ['K76A rrkb', 'K98A rrrb'], [100, 0, 0]],
    ['A984-A632', 0, [], [100, 0, 0]],
    ['KQJT-5432', 40, ['8654 rrkb', 'JT87 rrrb', 'KQJT rrrr'], [9, 80, 11]],
    ['KQJ8-QT86', 7, ['8TJK rrrb', 'QT87 rrkb'], [9, 80, 11]],
    ['K987-Q432', 0, [], [100, 0, 0]],
    ['JT96-7432', 0, [], [100, 0, 0]],
    ['KQ98-JT32', 0, [], [9, 80, 11]],
    ['K984-7532', 0, [], [100, 0, 0]],
    ['AKQJ-AJT2', 18, ['AKJ9 rkbg', 'AQJ9 rkbg', 'AJT8 rkbg'], [100, 0, 0]],
    ['AQ98-A432', 0, []],
    ['AK98-AT32', 0, []],
    ['A984-A632', 0, []],
    ['KQJT-5432', 3, ['KQJT rkbg'], [100, 0, 0], [0, 100, 0]],
    ['KQJ8-QT86', 0, []]
];

const noteRows = [
    ['A695', '100.0%', 222], ['A452', '100.0%', 210], ['96A5', '100.0%', 208], ['86A4', '100.0%', 190],
    ['A864', '100.0%', 189], ['A965', '100.0%', 174], ['J9A6', '100.0%', 170], ['A9J6', '100.0%', 170],
    ['A542', '100.0%', 154], ['A684', '100.0%', 149], ['AJ96', '100.0%', 145], ['A463', '100.0%', 91],
    ['64A3', '100.0%', 90], ['76A3', '100.0%', 78], ['A763', '100.0%', 61], ['A643', '100.0%', 60],
    ['74A3', '100.0%', 51], ['A673', '100.0%', 31], ['97A4', '100.0%', 15], ['A473', '100.0%', 14],
    ['A794', '58.0%', 14], ['A974', '100.0%', -1], ['A743', '100.0%', -1]
];

// Цветовая шкала: красный - жёлтый - зелёный
function scale(value) {
    const red = [248, 105, 107], yellow = [255, 235, 132], green = [99, 190, 123];
    const from = value < 50 ? red : yellow;
    const to = value < 50 ? yellow : green;
    const k = value < 50 ? value / 50 : (value - 50) / 50;
    return `rgb(${from.map((c, i) => Math.round(c + (to[i] - c) * k)).join(',')})`;
}

function eye(kind) {
    return `<td class="eye ${kind}"><svg><use href="#i-eye"/></svg></td>`;
}

// Пустые колонки вокруг карт: слева и справа от каждой группы
function renderCards(cards) {
    let html = '<td class="plain"></td>';
    for (let i = 0; i < 4; i++) {
        const [hand, suits] = (cards[i] || '').split(' ');
        for (let j = 0; j < 4; j++) {
            html += hand ? `<td class="card ${suits[j]}">${hand[j]}</td>` : '<td class="plain"></td>';
        }
        html += '<td class="plain dashed"></td>';
        if (i < 3) html += '<td class="plain"></td>';
    }
    return html;
}

function renderAnswers(values, kind) {
    return values.map((v, i) => {
        let color = scale(0);
        if (values[0] < 50) color = scale(i === 2 && v ? 45 : i === 2 ? 0 : 100);
        else if (values[0] < 100) color = scale(100 - values[0]);
        return `<td style="background:${color}">${v}</td>`;
    }).join('') + eye(kind);
}

document.getElementById('cols').innerHTML = '<col style="width:13px">' +
    columns.map(c => c[1] ? `<col style="width:${c[1]}px">` : '<col>').join('');
document.getElementById('letters').innerHTML = '<th></th>' +
    columns.map(([name, width]) => `<th class="${width && width < 9 ? 'narrow' : ''}">${name}</th>`).join('');

document.getElementById('hands').innerHTML = rows.map((row, i) => {
    const [name, freq, cards, oop = [100, 0, 0], ip = oop] = row;
    const area = i < 10 ? 'yellow' : i < 24 ? 'blue' : 'gray';
    const last = i === 9 || i === 23 ? 'last' : '';
    const kind = i === 0 ? 'full' : freq === 0 ? 'zero' : 'commented';
    const answerKind = i === 0 ? 'commented' : oop[0] === 100 ? 'zero' : '';
    return `<tr class="${area} ${last}">
        <th class="num ${i === 1 ? 'selected' : ''}">${i + 4}</th>
        <td class="name">${name}</td>
        <td class="freq" style="background:${scale(freq)}">${freq}</td>
        ${renderCards(cards)}${eye(kind)}
        <td class="gap"></td>${renderAnswers(oop, answerKind)}
        <td class="gap"></td>${renderAnswers(ip, ip[1] === 100 ? 'full edge' : answerKind + ' edge')}
        ${'<td class="out"></td>'.repeat(7)}
    </tr>`;
}).join('');

document.getElementById('note-rows').innerHTML = noteRows.map(([hand, pct, combo]) => `<tr><td></td>
    ${[...hand].map((c, i) => `<td class="card ${i < 2 ? 'r' : 'k'}">${c}</td>`).join('')}
    <td class="pct">${pct}</td><td>${combo}</td></tr>`).join('');
```
